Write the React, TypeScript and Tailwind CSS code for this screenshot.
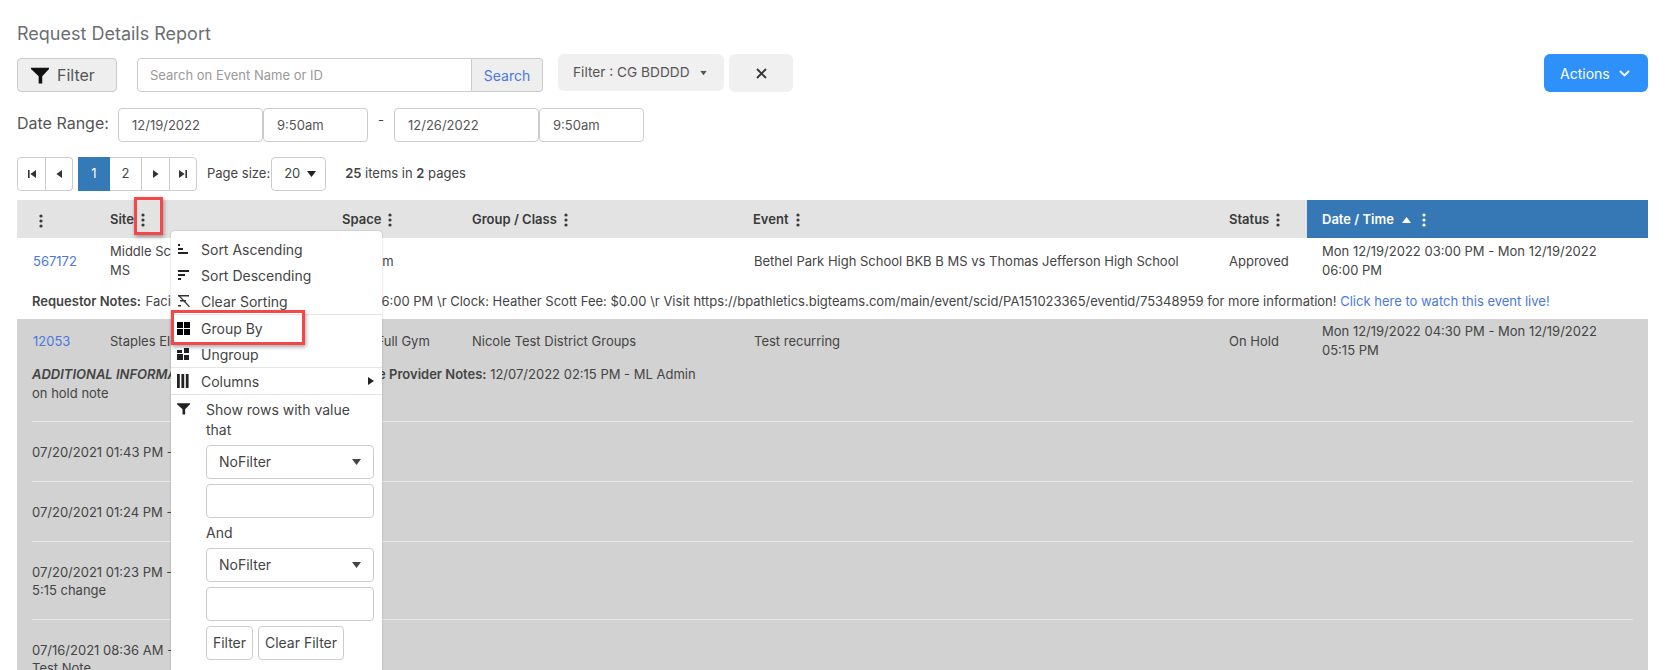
import React from "react";

const Kebab = ({ className = "" }: { className?: string }) => (
  <svg width="4" height="14" viewBox="0 0 4 14" className={"inline-block shrink-0 " + className} fill="currentColor">
    <circle cx="2" cy="2" r="1.6" />
    <circle cx="2" cy="7" r="1.6" />
    <circle cx="2" cy="12" r="1.6" />
  </svg>
);

const Funnel = ({ size = 16 }: { size?: number }) => (
  <svg width={size} height={size} viewBox="0 0 16 16" fill="currentColor" className="shrink-0">
    <path d="M0 1.5h16v1.2L10 9v6.5H6.8V9L0 2.7z" />
  </svg>
);

const Tri = ({ className = "" }: { className?: string }) => (
  <svg width="9" height="6" viewBox="0 0 9 6" fill="currentColor" className={"shrink-0 " + className}>
    <path d="M0 0h9L4.5 6z" />
  </svg>
);

const PagerIcon = ({ kind }: { kind: "first" | "prev" | "next" | "last" }) => (
  <svg width="10" height="10" viewBox="0 0 10 10" fill="#333">
    {kind === "first" && <path d="M1 1h1.6v8H1zM9 1v8L3.4 5z" />}
    {kind === "prev" && <path d="M8 1v8L2.4 5z" />}
    {kind === "next" && <path d="M2 1v8l5.6-4z" />}
    {kind === "last" && <path d="M9 1H7.4v8H9zM1 1v8l5.6-4z" />}
  </svg>
);

const SortAsc = () => (
  <svg width="12" height="12" viewBox="0 0 12 12" fill="#222">
    <path d="M1 1h2v2H1zM1 5h5v2H1zM1 9h10v2H1z" />
  </svg>
);
const SortDesc = () => (
  <svg width="12" height="12" viewBox="0 0 12 12" fill="#222">
    <path d="M1 1h11v2H1zM1 5h7v2H1zM1 9h3v2H1z" />
  </svg>
);
const ClearSort = () => (
  <svg width="14" height="14" viewBox="0 0 14 14" fill="#333">
    <path d="M1 1h11v1.6H1zM3 6h6v1.6H3zM1 11h3v1.6H1z" />
    <path d="M1 1.5l1-.8 11 11.8-1 .8z" />
  </svg>
);
const GroupIcon = () => (
  <svg width="13" height="13" viewBox="0 0 13 13" fill="#000">
    <path d="M0 0h6v6H0zM7 0h6v6H7zM0 7h6v6H0zM7 7h6v6H7z" />
  </svg>
);
const UngroupIcon = () => (
  <svg width="13" height="13" viewBox="0 0 13 13" fill="#222">
    <path d="M0 6h6v6H0zM7 7h5v5H7zM0 2h5v3H0zM7 0h5v5H7z" />
  </svg>
);
const ColumnsIcon = () => (
  <svg width="12" height="14" viewBox="0 0 12 14" fill="#222">
    <path d="M0 0h2.8v14H0zM4.4 0h2.8v14H4.4zM8.8 0h2.8v14H8.8z" />
  </svg>
);

const inputCls =
  "h-[34px] border border-[#ccc] rounded-[4px] bg-white px-[13px] text-[13px] text-[#555] outline-none";

const Th = ({ label, className = "" }: { label: string; className?: string }) => (
  <th className={"pl-[15px] pt-[2px] text-left font-semibold text-[13px] text-[#3a3a3a] " + className}>
    <span className="inline-flex items-center gap-[7px]">
      {label}
      <Kebab />
    </span>
  </th>
);

const MenuItem = ({ icon, label, arrow, h = 26 }: { icon: React.ReactNode; label: string; arrow?: boolean; h?: number }) => (
  <div className="flex items-center pl-[6px] pr-[8px]" style={{ height: h }}>
    <span className="w-[24px] flex items-center">{icon}</span>
    <span>{label}</span>
    {arrow && (
      <svg width="6" height="8" viewBox="0 0 6 8" fill="#222" className="ml-auto">
        <path d="M0 0l6 4-6 4z" />
      </svg>
    )}
  </div>
);

const History = ({ date, note }: { date: string; note?: string }) => (
  <div className="border-t border-[#e8e8e8] pt-[21px] pb-[20px] leading-[18px]">
    <div>{date}</div>
    {note && <div>{note}</div>}
  </div>
);

const SelectBox = () => (
  <div className="h-[34px] border border-[#ccc] rounded-[4px] bg-white flex items-center justify-between pl-[12px] pr-[12px]">
    <span>NoFilter</span>
    <Tri />
  </div>
);

export default function App() {
  return (
    <div className="relative h-[670px] w-[1666px] overflow-hidden bg-white font-['Inter','Liberation_Sans',sans-serif] text-[13px] text-[#444]">
      <div className="pl-[17px] pr-[18px]">
        <h1 className="pt-[22px] h-[54px] text-[18px] leading-[24px] text-[#6b6f73]">Request Details Report</h1>

        <div className="flex items-start h-[38px]">
          <button className="mt-[4px] w-[100px] h-[34px] border border-[#ccc] rounded-[4px] bg-[#eee] flex items-center pl-[13px] gap-[8px] text-[16px] text-[#555]">
            <span className="text-[#111]"><Funnel size={18} /></span>
            Filter
          </button>
          <div className="mt-[4px] ml-[20px] flex h-[34px] w-[406px]">
            <input
              readOnly
              placeholder="Search on Event Name or ID"
              className="w-[335px] h-[34px] border border-[#ccc] rounded-l-[4px] bg-white px-[12px] text-[13px] placeholder:text-[#999] outline-none"
            />
            <div className="flex-1 border border-l-0 border-[#ccc] rounded-r-[4px] bg-[#eee] flex items-center justify-center text-[14px] text-[#4c78dd]">
              Search
            </div>
          </div>
          <div className="ml-[15px] w-[166px] h-[37px] rounded-[6px] bg-[#f0f0f0] flex items-center pl-[15px] gap-[9px] text-[13.7px] text-[#555]">
            Filter : CG BDDDD
            <Tri className="scale-75" />
          </div>
          <div className="ml-[5px] w-[64px] h-[38px] rounded-[6px] bg-[#f0f0f0] flex items-center justify-center">
            <svg width="11" height="11" viewBox="0 0 11 11" stroke="#333" strokeWidth="1.8" fill="none">
              <path d="M1 1l9 9M10 1l-9 9" />
            </svg>
          </div>
          <div className="ml-auto w-[104px] h-[38px] rounded-[6px] bg-[#2e90fa] text-white text-[14px] flex items-center pl-[16px] gap-[9px]">
            Actions
            <svg width="11" height="7" viewBox="0 0 11 7" stroke="#fff" strokeWidth="1.8" fill="none">
              <path d="M1 1l4.5 4.5L10 1" />
            </svg>
          </div>
        </div>

        <div className="flex items-center mt-[16px] h-[34px]">
          <span className="text-[16px] w-[101px] text-[#555] -mt-[4px] whitespace-nowrap">Date Range:</span>
          <input readOnly value="12/19/2022" className={inputCls + " w-[145px]"} />
          <input readOnly value="9:50am" className={inputCls + " w-[105px]"} />
          <span className="w-[26px] text-center -mt-[8px]">-</span>
          <input readOnly value="12/26/2022" className={inputCls + " w-[145px]"} />
          <input readOnly value="9:50am" className={inputCls + " w-[105px]"} />
        </div>

        <div className="flex items-center mt-[15px] h-[34px]">
          <div className="flex h-[34px]">
            <div className="w-[29px] border border-[#ccc] rounded-l-[4px] flex items-center justify-center"><PagerIcon kind="first" /></div>
            <div className="w-[27px] border border-l-0 border-[#ccc] rounded-r-[4px] flex items-center justify-center mr-[5px]"><PagerIcon kind="prev" /></div>
            <div className="w-[32px] bg-[#337ab7] text-white flex items-center justify-center">1</div>
            <div className="w-[31px] border-y border-[#ccc] flex items-center justify-center">2</div>
            <div className="w-[28px] border border-r-0 border-[#ccc] flex items-center justify-center"><PagerIcon kind="next" /></div>
            <div className="w-[28px] border border-[#ccc] rounded-r-[4px] flex items-center justify-center"><PagerIcon kind="last" /></div>
          </div>
          <span className="ml-[10px]">Page size:</span>
          <div className="ml-[1px] w-[55px] h-[34px] border border-[#ccc] rounded-[4px] flex items-center pl-[12px] gap-[7px]">
            20 <Tri className="text-[#222]" />
          </div>
          <span className="ml-[19px]">
            <b className="font-semibold">25</b> items in <b className="font-semibold">2</b> pages
          </span>
        </div>

        <table className="mt-[9px] w-full table-fixed border-collapse">
          <colgroup>
            <col className="w-[78px]" />
            <col className="w-[232px]" />
            <col className="w-[130px]" />
            <col className="w-[281px]" />
            <col className="w-[476px]" />
            <col className="w-[93px]" />
            <col />
          </colgroup>
          <thead>
            <tr className="h-[38px] bg-[#e3e3e3]">
              <th className="pl-[22px] pt-[2px] text-left text-[#3a3a3a]"><Kebab /></th>
              <Th label="Site" />
              <Th label="Space" />
              <Th label="Group / Class" />
              <Th label="Event" />
              <Th label="Status" />
              <th className="pl-[15px] pt-[2px] text-left font-semibold text-white bg-[#3578b5]">
                <span className="inline-flex items-center gap-[8px]">
                  Date / Time
                  <Tri className="rotate-180" />
                  <Kebab className="ml-[3px]" />
                </span>
              </th>
            </tr>
          </thead>
          <tbody className="leading-[19px]">
            <tr className="h-[44px]">
              <td className="pl-[16px] pt-[2px]"><span className="text-[#4c78dd]">567172</span></td>
              <td className="pl-[15px] pt-[1px]">Middle School Gym<br />MS</td>
              <td className="pl-[15px] pt-[2px]">Big Gym</td>
              <td className="pl-[15px]"></td>
              <td className="pl-[16px] pt-[2px] whitespace-nowrap">Bethel Park High School BKB B MS vs Thomas Jefferson High School</td>
              <td className="pl-[15px] pt-[2px]">Approved</td>
              <td className="pl-[15px] pr-[40px] pt-[1px]">Mon 12/19/2022 03:00 PM - Mon 12/19/2022 06:00 PM</td>
            </tr>
            <tr className="h-[37px]">
              <td colSpan={7} className="pl-[15px] pt-[2px] whitespace-nowrap">
                <b className="font-semibold">Requestor Notes:</b> <span className="pl-[1px]">Facility: Main Gym Time: 03:00 PM - 06:00 PM \r Clock: Heather Scott Fee: $0.00 \r Visit https://bpathletics.bigteams.com/main/event/scid/PA151023365/eventid/75348959 for more information!</span>{" "}
                <span className="text-[#4c78dd]">Click here to watch this event live!</span>
              </td>
            </tr>
            <tr className="h-[44px] bg-[#d2d2d2]">
              <td className="pl-[16px] pt-[1px]"><span className="text-[#4c78dd]">12053</span></td>
              <td className="pl-[15px] pt-[1px]">Staples Elementary</td>
              <td className="pl-[15px] pt-[1px]">West Full Gym</td>
              <td className="pl-[15px] pt-[1px]">Nicole Test District Groups</td>
              <td className="pl-[16px] pt-[1px]">Test recurring</td>
              <td className="pl-[15px] pt-[1px]">On Hold</td>
              <td className="pl-[15px] pr-[40px]">Mon 12/19/2022 04:30 PM - Mon 12/19/2022 05:15 PM</td>
            </tr>
            <tr className="bg-[#d2d2d2]">
              <td colSpan={7} className="px-[15px] align-top">
                <div className="flex h-[58px] pt-[2px]">
                  <div className="w-[306px]">
                    <div><b className="font-semibold italic">ADDITIONAL INFORMATION:</b></div>
                    <div>on hold note</div>
                  </div>
                  <div><b className="font-semibold">Service Provider Notes:</b> 12/07/2022 02:15 PM - ML Admin</div>
                </div>
                <History date="07/20/2021 01:43 PM - ML Admin" />
                <History date="07/20/2021 01:24 PM - ML Admin" />
                <History date="07/20/2021 01:23 PM - ML Admin" note="5:15 change" />
                <History date="07/16/2021 08:36 AM - ML Admin" note="Test Note" />
              </td>
            </tr>
          </tbody>
        </table>
      </div>

      {/* column menu */}
      <div className="absolute left-[171px] top-[231px] w-[211px] h-[460px] bg-white rounded-[4px] shadow-[0_0_2px_rgba(0,0,0,0.25)] text-[14px] text-[#444] pt-[5px]">
        <MenuItem icon={<SortAsc />} label="Sort Ascending" />
        <MenuItem icon={<SortDesc />} label="Sort Descending" />
        <MenuItem icon={<ClearSort />} label="Clear Sorting" />
        <div className="border-t border-[#e5e5e5]" />
        <MenuItem icon={<GroupIcon />} label="Group By" />
        <MenuItem icon={<UngroupIcon />} label="Ungroup" />
        <div className="border-t border-[#e5e5e5]" />
        <MenuItem icon={<ColumnsIcon />} label="Columns" arrow />
        <div className="border-t border-[#e5e5e5]" />
        <div className="flex pl-[6px] pt-[5px]">
          <span className="w-[29px] pt-[2px] text-[#222]"><Funnel size={13} /></span>
          <div className="w-[168px] leading-[20px]">
            <div>Show rows with value that</div>
            <div className="mt-[5px] flex flex-col gap-[5px]">
              <SelectBox />
              <div className="h-[34px] border border-[#ccc] rounded-[4px]" />
            </div>
            <div className="mt-[5px] h-[20px]">And</div>
            <div className="mt-[5px] flex flex-col gap-[5px]">
              <SelectBox />
              <div className="h-[34px] border border-[#ccc] rounded-[4px]" />
            </div>
            <div className="mt-[5px] flex gap-[5px]">
              <div className="w-[47px] h-[34px] border border-[#ccc] rounded-[4px] flex items-center justify-center">Filter</div>
              <div className="w-[86px] h-[34px] border border-[#ccc] rounded-[4px] flex items-center justify-center">Clear Filter</div>
            </div>
          </div>
        </div>
      </div>

      {/* annotation boxes */}
      <div className="absolute left-[134px] top-[197px] w-[29px] h-[38px] border-[3px] border-[#f44747] shadow-[1px_2px_4px_rgba(0,0,0,0.35)]" />
      <div className="absolute left-[171px] top-[310px] w-[134px] h-[35px] border-[3px] border-[#f44747] shadow-[1px_2px_4px_rgba(0,0,0,0.35)]" />
    </div>
  );
}
